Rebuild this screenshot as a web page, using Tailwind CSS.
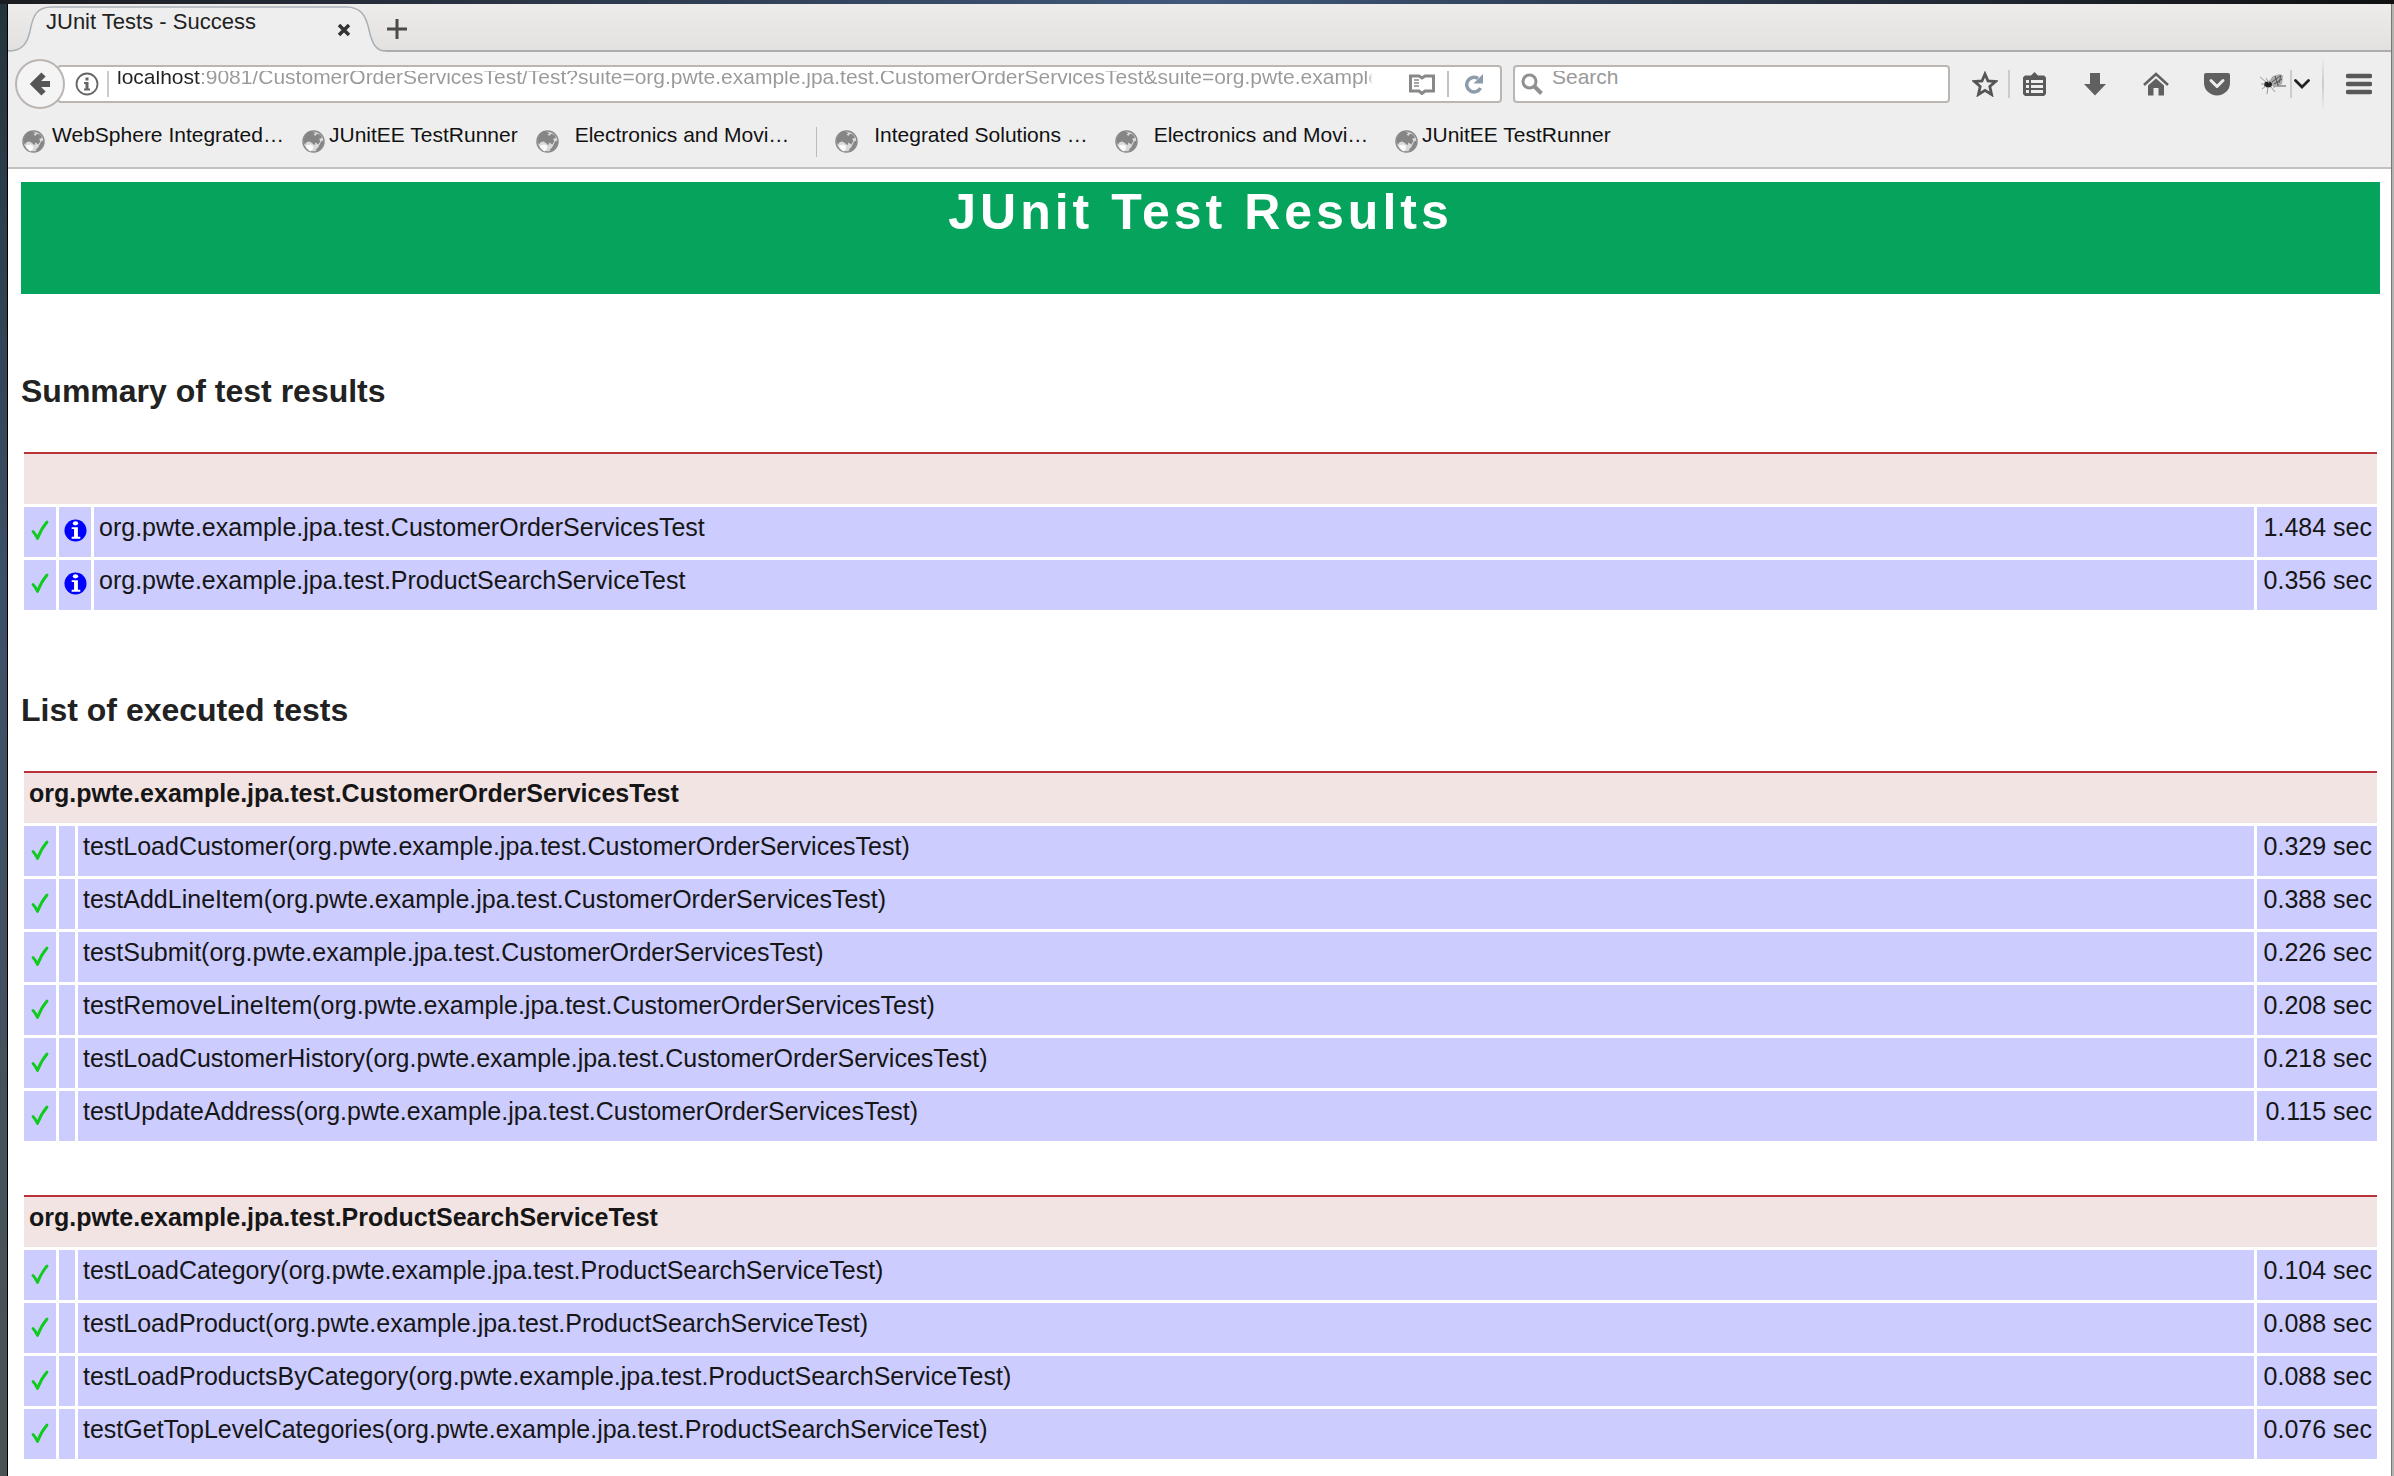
<!DOCTYPE html>
<html lang="en">
<head>
<meta charset="utf-8">
<title>JUnit Tests - Success</title>
<script src="https://cdn.jsdelivr.net/npm/@tailwindcss/browser@4"></script>
</head>
<body class="flex min-h-screen flex-col bg-white font-['Liberation_Sans',Arial,sans-serif] text-[#222]">

<svg class="hidden" aria-hidden="true">
  <symbol id="globe" viewBox="0 0 24 24">
    <circle cx="12" cy="12" r="11" fill="#d9d9d9" stroke="#8a8a8a" stroke-width="1.5"/>
    <path d="M2 13C1 7 5 2 10 1.500L14 3L12 5L14 6L16 4L19 5L21 8L18 9L19 12L17 15L14 13L13 16L11 14L8 12L5 12.500L3 15Z" fill="#858585"/>
    <path d="M4 16L9 15L12 17L11 20L9 22.500C6.500 21.500 4.500 19 4 16Z" fill="#fafafa"/>
    <path d="M20 12L22.500 11C22.500 16 20 20 16 22L14 21L17 18Z" fill="#858585"/>
  </symbol>
  <symbol id="check" viewBox="0 0 18 21">
    <path d="M2 11.500Q4.500 14 6.500 18.500Q10 9 16 2" fill="none" stroke="#0fcb1c" stroke-width="2.800" stroke-linecap="round" stroke-linejoin="round"/>
  </symbol>
  <symbol id="info" viewBox="0 0 24 24">
    <circle cx="12" cy="12" r="11.500" fill="#00f"/>
    <ellipse cx="12" cy="4.500" rx="2.800" ry="2.200" fill="#fff"/>
    <path d="M8 8.500H14.500V18.500H17V20.500H8V18.500H10.500V10.500H8Z" fill="#fff"/>
  </symbol>
</svg>

<div class="h-1 shrink-0 bg-linear-to-r from-[#1b1c20] via-[#3f587c] to-[#101010]"></div>

<div class="flex grow">
  <div class="w-2 shrink-0 border-r border-black bg-linear-to-b from-[#25343c] via-[#3c5068] via-40% to-[#4a5254]"></div>

  <div class="flex min-w-0 grow flex-col">
    <!-- Tab strip -->
    <div class="flex h-12 bg-linear-to-b from-[#edecea] to-[#e2e1df] shadow-[inset_0_-2px_0_#adadad]">
      <div class="relative flex w-[378px] items-start">
        <svg class="absolute inset-0 h-12 w-[378px]" viewBox="0 0 380 48" fill="none" preserveAspectRatio="none">
          <path d="M0 48V47C14 47 19 40 22 28C25 11 29 3 44 3H340C355 3 360 12 363 26C366 40 370 47 380 47V48Z" fill="#eee"/>
          <path d="M0 47C14 47 19 40 22 28C25 11 29 3 44 3H340C355 3 360 12 363 26C366 40 370 47 380 47" stroke="#a9b0b6" stroke-width="1.500"/>
        </svg>
        <span class="relative grow pt-1.5 pl-[38px] text-[22px] leading-6">JUnit Tests - Success</span>
        <button class="relative mt-[18px] mr-[34px] size-4" aria-label="Close tab">
          <svg class="size-4" viewBox="0 0 16 16"><path d="M3 3L13 13M13 3L3 13" stroke="#333" stroke-width="3.500"/></svg>
        </button>
      </div>
      <button class="flex size-[22px] self-center pt-0.5" aria-label="New tab">
        <svg class="ml-px size-5" viewBox="0 0 20 20"><path d="M10 0V20M0 10H20" stroke="#4a4a4a" stroke-width="3"/></svg>
      </button>
    </div>

    <!-- Navigation toolbar -->
    <div class="flex h-16 items-center bg-[#eee] pl-[7px] text-[21px]">
      <button class="z-10 flex size-[50px] shrink-0 items-center justify-center rounded-full border-2 border-[#bcb6b2] bg-[#f4f4f4]" aria-label="Back">
        <svg class="h-6 w-[22px]" viewBox="0 0 22 24"><path d="M21 12H5M14.500 2.500L5 12L14.500 21.500" fill="none" stroke="#555" stroke-width="6"/></svg>
      </button>
      <div class="-ml-2 flex h-[38px] min-w-0 grow items-center rounded-sm border-2 border-[#bcb6b2] bg-white pl-4">
        <svg class="size-6 shrink-0" viewBox="0 0 24 24"><circle cx="12" cy="12" r="10.500" fill="none" stroke="#666" stroke-width="1.800"/><path d="M10.500 5.500H13.500V8.500H10.500ZM9 10H13.500V16.500H15V18.500H9V16.500H10.500V12H9Z" fill="#666"/></svg>
        <span class="ml-2 h-[26px] w-0.5 shrink-0 bg-[#ccc]"></span>
        <div class="ml-2 h-[26px] min-w-0 grow overflow-hidden">
          <input aria-label="Address" class="-mt-1.5 block h-6 w-full bg-linear-[90deg,#222_83px,#999_83px,#999_calc(100%-6px),transparent] bg-clip-text leading-6 text-transparent outline-none" value="localhost:9081/CustomerOrderServicesTest/Test?suite=org.pwte.example.jpa.test.CustomerOrderServicesTest&amp;suite=org.pwte.example.jpa.test.ProductSearchServiceTest">
        </div>
        <button class="ml-9 shrink-0" aria-label="Reader view">
          <svg class="h-[22px] w-[26px]" viewBox="0 0 26 22"><path d="M1.500 3H10L13 5L16 3H24.500V18H16L13 20.500L10 18H1.500Z" fill="none" stroke="#888" stroke-width="3"/><path d="M5 7H10M5 10H10M5 13H10" stroke="#888" stroke-width="1.500"/></svg>
        </button>
        <span class="ml-3 h-[26px] w-0.5 shrink-0 bg-[#c5c0bc]"></span>
        <button class="mr-4 ml-[15px] shrink-0" aria-label="Reload">
          <svg class="size-5" viewBox="0 0 20 20"><path d="M16.500 14A7.300 7.300 0 1 1 14 4.500" fill="none" stroke="#8d9cab" stroke-width="3.500"/><path d="M19 0V9.500H9.500Z" fill="#8d9cab"/></svg>
        </button>
      </div>
      <div class="ml-[11px] flex h-[38px] w-[437px] shrink-0 items-center rounded-sm border-2 border-[#bcb6b2] bg-white pl-1.5">
        <svg class="size-[22px] shrink-0" viewBox="0 0 22 22"><circle cx="8.500" cy="8.500" r="6.500" fill="none" stroke="#909090" stroke-width="3"/><path d="M13 13L20.500 20.500" stroke="#909090" stroke-width="4"/></svg>
        <div class="ml-[9px] h-[26px] min-w-0 grow overflow-hidden">
          <input aria-label="Search" placeholder="Search" class="-mt-1.5 block h-6 w-full leading-6 outline-none placeholder:text-[#999]">
        </div>
      </div>
      <button class="ml-[22px] shrink-0" aria-label="Bookmark this page">
        <svg class="size-[26px]" viewBox="0 0 26 26"><path d="M13 3L16 10L23.500 10.500L17.800 15.500L19.600 23.500L13 19.300L6.400 23.500L8.200 15.500L2.500 10.500L10 10Z" fill="none" stroke="#555" stroke-width="2.800"/></svg>
      </button>
      <span class="ml-2.5 h-7 w-0.5 shrink-0 bg-[#ccc]"></span>
      <button class="ml-[13px] shrink-0" aria-label="Bookmarks">
        <svg class="h-6 w-[23px]" viewBox="0 0 23 24"><path d="M8 3.500L11.500 0L15 3.500H21L23 5.500V22L21 24H2L0 22V5.500L2 3.500Z" fill="#5a5a5a"/><path d="M3 8H6V11H3ZM8 8H20V11H8ZM3 13H6V16H3ZM8 13H20V16H8ZM3 18H6V21H3ZM8 18H20V21H8Z" fill="#eee"/></svg>
      </button>
      <button class="ml-[37px] shrink-0" aria-label="Downloads">
        <svg class="size-6" viewBox="0 0 24 24"><path d="M7 1H17V12H23L12 23.500L1 12H7Z" fill="#606060"/></svg>
      </button>
      <button class="ml-9 shrink-0" aria-label="Home">
        <svg class="h-6 w-[26px]" viewBox="0 0 26 24"><path d="M1 13L13 2L25 13" fill="none" stroke="#606060" stroke-width="2.500"/><path d="M5 13.500L13 6.500L21 13.500V23.500H15.500V16H10.500V23.500H5Z" fill="#606060"/></svg>
      </button>
      <button class="ml-[35px] shrink-0" aria-label="Pocket">
        <svg class="h-6 w-[26px]" viewBox="0 0 26 24"><path d="M2 1H24Q26 1 26 3V11A13 12.500 0 0 1 0 11V3Q0 1 2 1Z" fill="#606060"/><path d="M7 8.500L13 14.500L19 8.500" fill="none" stroke="#eee" stroke-width="3" stroke-linecap="round" stroke-linejoin="round"/></svg>
      </button>
      <button class="ml-[30px] shrink-0" aria-label="Firebug">
        <svg class="h-6 w-[26px]" viewBox="0 0 26 24" fill="none"><path d="M9 9L13 4L20 2L23 4L22 12L14 16Z" fill="#aaa"/><path d="M12 10L20 4M14 12L22 7M15 4L18 13M21 3L19 11M17 14L26 14" stroke="#555"/><ellipse cx="8" cy="12.500" rx="4" ry="3" fill="#222"/><path d="M0 5L6 10M1 12H5M2 17L6 14M8 15L7 22M11 15L15 20M6 6L9 11" stroke="#999"/></svg>
      </button>
      <span class="ml-1 h-7 w-0.5 shrink-0 bg-[#ccc]"></span>
      <button class="ml-0.5 shrink-0" aria-label="Firebug options">
        <svg class="h-3 w-4" viewBox="0 0 16 12"><path d="M1.500 2.500L8 9L14.500 2.500" fill="none" stroke="#222" stroke-width="2.800" stroke-linecap="round"/></svg>
      </button>
      <span class="ml-3 h-14 w-0.5 shrink-0 bg-linear-to-b from-transparent via-[#ccc] to-transparent"></span>
      <button class="mr-[19px] ml-[22px] shrink-0" aria-label="Open menu">
        <svg class="h-[22px] w-[26px]" viewBox="0 0 26 22"><path d="M2 3H24M2 11H24M2 19H24" stroke="#585858" stroke-width="4.500" stroke-linecap="round"/></svg>
      </button>
    </div>

    <!-- Bookmarks toolbar -->
    <nav class="flex h-[53px] items-center border-b-2 border-[#c5c0bc] bg-[#eee] pl-3.5 text-[21px] leading-6 whitespace-nowrap text-[#111]" aria-label="Bookmarks toolbar">
      <a href="#" class="flex w-[280px] items-center"><svg class="size-[23px] shrink-0"><use href="#globe"/></svg><span class="mb-3.5 w-[246px] text-center">WebSphere Integrated…</span></a>
      <a href="#" class="flex w-[234px] items-center"><svg class="size-[23px] shrink-0"><use href="#globe"/></svg><span class="mb-3.5 pl-1">JUnitEE TestRunner</span></a>
      <a href="#" class="flex w-[280px] items-center"><svg class="size-[23px] shrink-0"><use href="#globe"/></svg><span class="mb-3.5 w-[246px] text-center">Electronics and Movi…</span></a>
      <span class="mr-[18px] h-[30px] w-px bg-[#bbb]"></span>
      <a href="#" class="flex w-[280px] items-center"><svg class="size-[23px] shrink-0"><use href="#globe"/></svg><span class="mb-3.5 w-[246px] text-center">Integrated Solutions …</span></a>
      <a href="#" class="flex w-[280px] items-center"><svg class="size-[23px] shrink-0"><use href="#globe"/></svg><span class="mb-3.5 w-[246px] text-center">Electronics and Movi…</span></a>
      <a href="#" class="flex w-[234px] items-center"><svg class="size-[23px] shrink-0"><use href="#globe"/></svg><span class="mb-3.5 pl-1">JUnitEE TestRunner</span></a>
    </nav>

    <!-- Test report -->
    <main class="grow pt-[13px] pr-[11px] pb-2 pl-[13px] text-[25px] leading-[30px]">
      <h1 class="h-[112px] bg-[#05a35c] text-center text-[50px] leading-[60px] font-bold tracking-[4px] text-white">JUnit Test Results</h1>

      <h2 class="mt-[79px] text-[32px] leading-9 font-bold">Summary of test results</h2>
      <table class="mt-10 w-full table-fixed border-separate border-spacing-[3px] text-[#161616] [&_td]:h-[50px] [&_td]:bg-[#ccccff] [&_td]:px-[5px] [&_td]:pt-[5px] [&_td]:align-top [&_th]:h-[52px] [&_th]:border-t-2 [&_th]:border-[#b93438] [&_th]:bg-[#f3e4e4]">
        <colgroup><col class="w-8"><col class="w-8"><col><col class="w-[120px]"></colgroup>
        <thead><tr><th colspan="4"></th></tr></thead>
        <tbody>
          <tr><td><svg class="mt-2 ml-0.5 h-[21px] w-[18px]"><use href="#check"/></svg></td><td><svg class="mt-[7px] size-[23px]"><use href="#info"/></svg></td><td>org.pwte.example.jpa.test.CustomerOrderServicesTest</td><td class="text-right whitespace-nowrap">1.484 sec</td></tr>
          <tr><td><svg class="mt-2 ml-0.5 h-[21px] w-[18px]"><use href="#check"/></svg></td><td><svg class="mt-[7px] size-[23px]"><use href="#info"/></svg></td><td>org.pwte.example.jpa.test.ProductSearchServiceTest</td><td class="text-right whitespace-nowrap">0.356 sec</td></tr>
        </tbody>
      </table>

      <h2 class="mt-[79px] text-[32px] leading-9 font-bold">List of executed tests</h2>
      <table class="mt-10 w-full table-fixed border-separate border-spacing-[3px] text-[#161616] [&_td]:h-[50px] [&_td]:bg-[#ccccff] [&_td]:px-[5px] [&_td]:pt-[5px] [&_td]:align-top [&_th]:h-[52px] [&_th]:border-t-2 [&_th]:border-[#b93438] [&_th]:bg-[#f3e4e4] [&_th]:px-[5px] [&_th]:pt-[5px] [&_th]:text-left [&_th]:align-top">
        <colgroup><col class="w-8"><col class="w-4"><col><col class="w-[120px]"></colgroup>
        <thead><tr><th colspan="4">org.pwte.example.jpa.test.CustomerOrderServicesTest</th></tr></thead>
        <tbody>
          <tr><td><svg class="mt-[9px] ml-0.5 h-[21px] w-[18px]"><use href="#check"/></svg></td><td></td><td>testLoadCustomer(org.pwte.example.jpa.test.CustomerOrderServicesTest)</td><td class="text-right whitespace-nowrap">0.329 sec</td></tr>
          <tr><td><svg class="mt-[9px] ml-0.5 h-[21px] w-[18px]"><use href="#check"/></svg></td><td></td><td>testAddLineItem(org.pwte.example.jpa.test.CustomerOrderServicesTest)</td><td class="text-right whitespace-nowrap">0.388 sec</td></tr>
          <tr><td><svg class="mt-[9px] ml-0.5 h-[21px] w-[18px]"><use href="#check"/></svg></td><td></td><td>testSubmit(org.pwte.example.jpa.test.CustomerOrderServicesTest)</td><td class="text-right whitespace-nowrap">0.226 sec</td></tr>
          <tr><td><svg class="mt-[9px] ml-0.5 h-[21px] w-[18px]"><use href="#check"/></svg></td><td></td><td>testRemoveLineItem(org.pwte.example.jpa.test.CustomerOrderServicesTest)</td><td class="text-right whitespace-nowrap">0.208 sec</td></tr>
          <tr><td><svg class="mt-[9px] ml-0.5 h-[21px] w-[18px]"><use href="#check"/></svg></td><td></td><td>testLoadCustomerHistory(org.pwte.example.jpa.test.CustomerOrderServicesTest)</td><td class="text-right whitespace-nowrap">0.218 sec</td></tr>
          <tr><td><svg class="mt-[9px] ml-0.5 h-[21px] w-[18px]"><use href="#check"/></svg></td><td></td><td>testUpdateAddress(org.pwte.example.jpa.test.CustomerOrderServicesTest)</td><td class="text-right whitespace-nowrap">0.115 sec</td></tr>
        </tbody>
      </table>

      <table class="mt-12 w-full table-fixed border-separate border-spacing-[3px] text-[#161616] [&_td]:h-[50px] [&_td]:bg-[#ccccff] [&_td]:px-[5px] [&_td]:pt-[5px] [&_td]:align-top [&_th]:h-[52px] [&_th]:border-t-2 [&_th]:border-[#b93438] [&_th]:bg-[#f3e4e4] [&_th]:px-[5px] [&_th]:pt-[5px] [&_th]:text-left [&_th]:align-top">
        <colgroup><col class="w-8"><col class="w-4"><col><col class="w-[120px]"></colgroup>
        <thead><tr><th colspan="4">org.pwte.example.jpa.test.ProductSearchServiceTest</th></tr></thead>
        <tbody>
          <tr><td><svg class="mt-[9px] ml-0.5 h-[21px] w-[18px]"><use href="#check"/></svg></td><td></td><td>testLoadCategory(org.pwte.example.jpa.test.ProductSearchServiceTest)</td><td class="text-right whitespace-nowrap">0.104 sec</td></tr>
          <tr><td><svg class="mt-[9px] ml-0.5 h-[21px] w-[18px]"><use href="#check"/></svg></td><td></td><td>testLoadProduct(org.pwte.example.jpa.test.ProductSearchServiceTest)</td><td class="text-right whitespace-nowrap">0.088 sec</td></tr>
          <tr><td><svg class="mt-[9px] ml-0.5 h-[21px] w-[18px]"><use href="#check"/></svg></td><td></td><td>testLoadProductsByCategory(org.pwte.example.jpa.test.ProductSearchServiceTest)</td><td class="text-right whitespace-nowrap">0.088 sec</td></tr>
          <tr><td><svg class="mt-[9px] ml-0.5 h-[21px] w-[18px]"><use href="#check"/></svg></td><td></td><td>testGetTopLevelCategories(org.pwte.example.jpa.test.ProductSearchServiceTest)</td><td class="text-right whitespace-nowrap">0.076 sec</td></tr>
        </tbody>
      </table>
    </main>
  </div>

  <div class="w-[3px] shrink-0 border-l border-[#777] bg-[#b5b3ae]"></div>
</div>
</body>
</html>
